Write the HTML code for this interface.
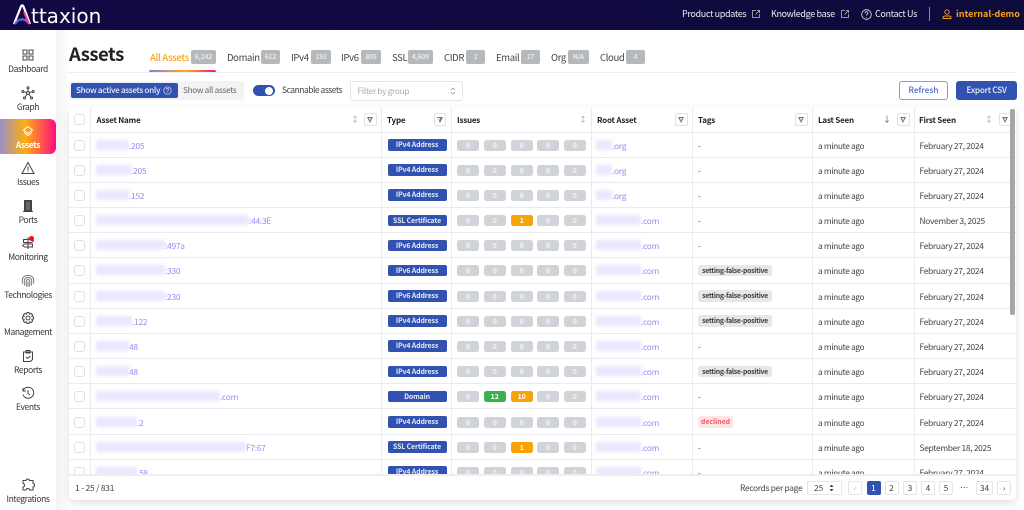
<!DOCTYPE html>
<html><head><meta charset="utf-8"><style>
*{box-sizing:border-box;margin:0;padding:0}
html,body{width:1024px;height:510px;overflow:hidden;background:#fff;font-family:"Noto Sans CJK JP","Liberation Sans",sans-serif;color:#343a40}
.a{position:absolute;white-space:nowrap}
#top{position:absolute;left:0;top:0;width:1024px;height:30px;background:linear-gradient(90deg,#120844,#0d0a3c)}
#top .a{color:#eceef5;font-size:9px;letter-spacing:-.35px;top:7px;line-height:14px}
#side{position:absolute;left:0;top:30px;width:56px;height:480px;background:#fff}
#gut{position:absolute;left:56px;top:30px;width:13px;height:480px;background:linear-gradient(90deg,#f3f3f3,#fafafa 70%,#fff)}
.nav{position:absolute;left:0;width:56px;text-align:center;font-size:8.5px;letter-spacing:-.4px;line-height:12px;color:#333}
.nav svg{position:absolute;left:21px;top:-15px;width:14px;height:14px;fill:none;stroke:#444;stroke-width:1}
.act{position:absolute;left:0;top:119px;width:56px;height:35px;border-radius:0 6px 6px 0;background:linear-gradient(90deg,#9a8fc8,#ffad0d 45%,#ff0d7f)}
.tab{position:absolute;top:50px;font-size:9.5px;letter-spacing:-.35px;line-height:14px;color:#444;white-space:nowrap}
.cnt{position:absolute;top:50px;height:13.5px;background:#b5b9bc;color:#e8eaec;font-size:6.6px;letter-spacing:-.1px;font-weight:700;line-height:13.5px;text-align:center;border-radius:2px}
#tbl{position:absolute;left:69px;top:107px;width:947px;height:393px;background:#fff;border-radius:5px;box-shadow:0 3px 8px rgba(0,0,0,.13);overflow:hidden}
#clip{position:absolute;left:0;top:0;width:947px;height:368px;overflow:hidden}
.r{position:absolute;left:0;width:947px;height:25.17px;border-bottom:1px solid #e9ebf0}
.v{position:absolute;top:0;width:1px;height:368px;background:#e9ebf0}
.h{position:absolute;top:7px;font-size:8px;letter-spacing:-.2px;font-weight:700;color:#222;line-height:14px;white-space:nowrap}
.cb{position:absolute;left:5px;top:7px;width:11px;height:11px;border:1px solid #dfe1e5;border-radius:3px;background:#fff}
.n{position:absolute;left:27px;top:7px;font-size:8.4px;letter-spacing:-.25px;line-height:13px;color:#8f8ef0;white-space:nowrap}
.b{display:inline-block;height:10px;background:#e9e8ff;filter:blur(1.6px);vertical-align:-1px}
.t{position:absolute;left:318.5px;top:6.5px;width:59px;height:11.5px;background:#3152b0;border-radius:2px;color:#e6eaf8;font-size:6.9px;letter-spacing:-.1px;font-weight:700;line-height:11.5px;text-align:center}
.i{position:absolute;top:7px;width:21.5px;height:11px;background:#d0d4d9;border-radius:2.5px;color:#f4f5f6;font-size:6.9px;font-weight:700;line-height:11px;text-align:center}
.i1{left:388px}.i2{left:415px}.i3{left:442px}.i4{left:468px}.i5{left:495px}
.g{background:#38b24c;color:#fff}.o{background:#f8a207;color:#fff}
.ra{position:absolute;left:527px;top:7px;font-size:8.4px;letter-spacing:-.25px;line-height:13px;color:#8f8ef0;white-space:nowrap}
.tg{position:absolute;left:629px;top:7px;font-size:8.4px;line-height:13px;color:#555}
.tp{position:absolute;left:629px;top:6.5px;width:74px;height:11.5px;background:#e7e7e8;border-radius:2.5px;color:#3a3f44;font-size:6.9px;letter-spacing:-.28px;font-weight:700;line-height:11.5px;text-align:center}
.tr{position:absolute;left:629px;top:6.5px;width:35px;height:11.5px;background:#ffe5e6;border-radius:2.5px;color:#f0585e;font-size:6.9px;font-weight:700;line-height:11.5px;text-align:center}
.ls{position:absolute;left:749px;top:7px;font-size:8.4px;letter-spacing:-.38px;line-height:13px;color:#444;white-space:nowrap}
.fs{position:absolute;left:850.5px;top:7px;font-size:8.4px;letter-spacing:-.3px;line-height:13px;color:#444;white-space:nowrap}
.f{position:absolute;top:6px;width:12.5px;height:13px;border:1px solid #dfe1e5;border-radius:2px;background:#fff}
.f:after{content:"";position:absolute;left:2.2px;top:3px;border-left:3px solid transparent;border-right:3px solid transparent;border-top:6px solid #777}
.f:before{content:"";position:absolute;z-index:1;left:3.7px;top:3.9px;border-left:1.5px solid transparent;border-right:1.5px solid transparent;border-top:3px solid #fff}
.s{position:absolute;top:6px;font-size:8px;line-height:13px;color:#aaa}
.p{position:absolute;top:481px;height:14px;width:14px;border:1px solid #e3e5e8;border-radius:2px;background:#fff;font-size:8.4px;line-height:12px;text-align:center;color:#444}
</style></head><body>
<div id="top">
<svg class="a" style="left:12px;top:4px;width:20px;height:21px" viewBox="0 0 20 21"><path d="M2 20L9 2.500c.7-1.500 1.800-1.500 2.500 0L18 20" fill="none" stroke="#fff" stroke-width="2.200"/><path d="M3 20c3-5 9-7 14-.5" fill="none" stroke="#5a6be0" stroke-width="2.200"/><path d="M12 8l5 12" fill="none" stroke="#ff3d80" stroke-width="2"/></svg>
<div class="a" style="left:31px;top:3px;font-family:'DejaVu Sans',sans-serif;font-size:20px;line-height:26px;color:#fff;letter-spacing:0">ttaxion</div>
<div class="a" style="left:682px">Product updates</div>
<svg class="a" style="left:752px;top:10px;width:8px;height:8px" viewBox="0 0 8 8" fill="none" stroke="#bbb" stroke-width=".8"><path d="M4 .5H.5v7h7V4M3.500 4.500L7.500.5M5 .5h2.500V3"/></svg>
<div class="a" style="left:771px">Knowledge base</div>
<svg class="a" style="left:841px;top:10px;width:8px;height:8px" viewBox="0 0 8 8" fill="none" stroke="#bbb" stroke-width=".8"><path d="M4 .5H.5v7h7V4M3.500 4.500L7.500.5M5 .5h2.500V3"/></svg>
<svg class="a" style="left:861px;top:9px;width:11px;height:11px" viewBox="0 0 11 11" fill="none" stroke="#eee" stroke-width=".8"><circle cx="5.500" cy="5.500" r="4.800"/><path d="M4 4.300c0-2 3-2 3-.2 0 1.200-1.500 1.100-1.500 2.500M5.500 8v.6"/></svg>
<div class="a" style="left:875px">Contact Us</div>
<div class="a" style="left:929px;top:7px;width:1px;height:14px;background:#8a88a8"></div>
<svg class="a" style="left:942px;top:9px;width:10px;height:10px" viewBox="0 0 10 10" fill="none" stroke="#f9a31a" stroke-width=".9"><circle cx="5" cy="3" r="2.200"/><path d="M1 9.500V8.500c0-1 1-1.500 2-1.500h4c1 0 2 .5 2 1.500v1z"/></svg>
<div class="a" style="left:956px;color:#f9a31a;font-weight:700;letter-spacing:0">internal-demo</div>
</div>
<div id="side"></div><div id="gut"></div>
<div class="act"></div>
<div class="nav" style="top:63px"><svg viewBox="0 0 14 14"><rect x="2" y="2" width="4" height="4"/><rect x="8" y="2" width="4" height="4"/><rect x="2" y="8" width="4" height="4"/><rect x="8" y="8" width="4" height="4"/></svg>Dashboard</div>
<div class="nav" style="top:101px"><svg viewBox="0 0 14 14"><circle cx="7" cy="7" r="1.500"/><circle cx="7" cy="1.800" r="1"/><circle cx="1.800" cy="5.500" r="1"/><circle cx="12.200" cy="5.500" r="1"/><circle cx="3.500" cy="12" r="1"/><circle cx="10.500" cy="12" r="1"/><path d="M7 3v2.500M3 5.800l2.500.8M11 5.800l-2.500.8M4.200 11l2-2.800M9.800 11l-2-2.800"/></svg>Graph</div>
<div class="nav" style="top:139px;color:#fff;font-weight:700"><svg viewBox="0 0 14 14" style="stroke:#fff"><path d="M7 2.500l4.500 3.500L7 9.500 2.500 6zM3 8.500L7 11.500 11 8.500"/></svg>Assets</div>
<div class="nav" style="top:176px"><svg viewBox="0 0 14 14"><path d="M7 1.500L13 12.500H1zM7 5.500v4M7 10.500v.6"/></svg>Issues</div>
<div class="nav" style="top:214px"><svg viewBox="0 0 14 14"><path d="M3.500 12.500V1.500h7v11M2 12.500h10"/><rect x="4.500" y="2.500" width="5" height="9" fill="#666"/></svg>Ports</div>
<div class="nav" style="top:251px"><svg viewBox="0 0 14 14"><path d="M7 1v12M2.500 3.500h8l2 1.500-2 1.500h-8zM11.500 8h-8l-2 1.500 2 1.500h8z"/></svg>Monitoring</div>
<div class="a" style="left:29px;top:235.500px;width:5px;height:5px;border-radius:50%;background:#f01010"></div>
<div class="nav" style="top:289px"><svg viewBox="0 0 14 14" style="stroke:#777"><path d="M7 1.500c-6 0-6 4-5.500 8M7 3.500c-4 0-4 3-3.500 8M7 5.500c-2 0-2 3-1.500 7M7 1.500c6 0 6 4 5.500 8M7 3.500c4 0 4 3 3.500 8M7 5.500c2 0 2 3 1.500 7M7 7.500v5"/></svg>Technologies</div>
<div class="nav" style="top:326px"><svg viewBox="0 0 14 14"><circle cx="7" cy="7" r="2"/><path d="M6 1.500h2l.5 1.700 1.600-.8 1.500 1.500-.8 1.600 1.700.5v2l-1.700.5.8 1.600-1.500 1.500-1.600-.8-.5 1.700H6l-.5-1.700-1.600.8-1.500-1.500.8-1.600-1.700-.5V6l1.700-.5-.8-1.600 1.500-1.500 1.600.8z"/></svg>Management</div>
<div class="nav" style="top:364px"><svg viewBox="0 0 14 14"><path d="M2.500 3h9v7.500l-2 2h-7zM5 1.500h4V4H5zM5 8l1.500 1.500L9.500 7"/></svg>Reports</div>
<div class="nav" style="top:401px"><svg viewBox="0 0 14 14"><path d="M2.200 4.500A5.500 5.500 0 1 1 2 8.500M2 2v3h3M7 4v3.500l2 1.500"/></svg>Events</div>
<div class="nav" style="top:493px"><svg viewBox="0 0 14 14"><path d="M5 2.500c0-2 3.500-2 3.500 0h3.500v3c2 0 2 3.500 0 3.500v3H8.500c0-2-3.500-2-3.500 0H2V9c2 0 2-3.500 0-3.500v-3z"/></svg>Integrations</div>
<div class="a" style="left:69px;top:41px;font-size:18.500px;letter-spacing:-.5px;line-height:26px;font-weight:700;color:#222">Assets</div>
<div class="tab" style="left:150px;color:#f9a31a;font-weight:500">All Assets</div><div class="cnt" style="left:191px;width:25px">6,242</div>
<div class="tab" style="left:227px">Domain</div><div class="cnt" style="left:261px;width:19px">612</div>
<div class="tab" style="left:291px">IPv4</div><div class="cnt" style="left:311px;width:20px">193</div>
<div class="tab" style="left:341px">IPv6</div><div class="cnt" style="left:361px;width:20px">805</div>
<div class="tab" style="left:392px">SSL</div><div class="cnt" style="left:408px;width:25px">4,609</div>
<div class="tab" style="left:444px">CIDR</div><div class="cnt" style="left:466px;width:19px">2</div>
<div class="tab" style="left:496px">Email</div><div class="cnt" style="left:521px;width:19px">17</div>
<div class="tab" style="left:551px">Org</div><div class="cnt" style="left:568px;width:21px">N/A</div>
<div class="tab" style="left:600px">Cloud</div><div class="cnt" style="left:626px;width:19px">4</div>
<div class="a" style="left:69px;top:72px;width:947px;height:1px;background:#eceef0"></div>
<div class="a" style="left:149px;top:69.500px;width:67px;height:2.500px;border-radius:2px 2px 0 0;background:linear-gradient(90deg,#8d7ad8,#ffad0d 55%,#ff0d7f)"></div>
<div class="a" style="left:69px;top:81px;width:175px;height:19px;background:#f2f3f5;border-radius:3px"></div>
<div class="a" style="left:71px;top:83px;width:107px;height:15px;background:#3152b0;border-radius:2px;color:#e8ecf8;font-size:8.200px;letter-spacing:-.35px;line-height:15px;padding-left:5px;font-weight:500">Show active assets only</div>
<svg class="a" style="left:163px;top:86px;width:9px;height:9px" viewBox="0 0 9 9" fill="none" stroke="#dde" stroke-width=".7"><circle cx="4.500" cy="4.500" r="3.700"/><path d="M3.300 3.500c0-1.500 2.400-1.500 2.400 0 0 1-1.200.8-1.200 2M4.500 6.300v.5"/></svg>
<div class="a" style="left:183px;top:83px;font-size:8.200px;letter-spacing:-.3px;line-height:15px;color:#666">Show all assets</div>
<div class="a" style="left:253px;top:85px;width:22px;height:11px;border-radius:6px;background:#3152b0"></div>
<div class="a" style="left:265px;top:86.500px;width:8px;height:8px;border-radius:50%;background:#fff"></div>
<div class="a" style="left:282px;top:83px;font-size:8.500px;letter-spacing:-.5px;line-height:15px;color:#444">Scannable assets</div>
<div class="a" style="left:350px;top:81px;width:113px;height:19.500px;border:1px solid #e3e5e8;border-radius:3px;background:#fff;color:#aab;font-size:8.300px;letter-spacing:-.3px;line-height:18px;padding-left:6.500px">Filter by group</div>
<svg class="a" style="left:450px;top:87px;width:6px;height:8px" viewBox="0 0 6 8" fill="none" stroke="#999" stroke-width=".8"><path d="M1 3l2-2 2 2M1 5l2 2 2-2"/></svg>
<div class="a" style="left:899px;top:81px;width:49px;height:19px;border:1px solid #8a9cd4;border-radius:3px;background:#fff;color:#4c66b8;font-size:8.300px;font-weight:500;line-height:17px;text-align:center">Refresh</div>
<div class="a" style="left:956px;top:81px;width:61px;height:19px;background:#3152b0;border-radius:3px;color:#eef1fa;font-size:8.300px;letter-spacing:-.3px;font-weight:500;line-height:19px;text-align:center">Export CSV</div>
<div id="tbl"><div id="clip">
<div class="r" style="top:0;height:26px"><div class="cb" style="top:7px"></div>
<div class="h" style="left:27.500px">Asset Name</div><div class="s" style="left:282px">&#8597;</div><div class="f" style="left:295px"></div>
<div class="h" style="left:318px">Type</div><div class="f" style="left:364.500px"></div>
<div class="h" style="left:388px">Issues</div><div class="s" style="left:510px">&#8597;</div>
<div class="h" style="left:528px">Root Asset</div><div class="f" style="left:606px"></div>
<div class="h" style="left:629px">Tags</div><div class="f" style="left:726px"></div>
<div class="h" style="left:749px">Last Seen</div><div class="s" style="left:814px;color:#555">&#8595;</div><div class="f" style="left:828px"></div>
<div class="h" style="left:850px">First Seen</div><div class="s" style="left:916px">&#8597;</div><div class="f" style="left:930px"></div></div>

<div class="r" style="top:25.500px"><div class="cb"></div><div class="n"><span class="b" style="width:33px"></span>.205</div><div class="t">IPv4 Address</div><div class="i i1">0</div><div class="i i2">0</div><div class="i i3">0</div><div class="i i4">0</div><div class="i i5">0</div><div class="ra"><span class="b" style="width:16px"></span>.org</div><div class="tg">-</div><div class="ls">a minute ago</div><div class="fs">February 27, 2024</div></div>
<div class="r" style="top:50.670px"><div class="cb"></div><div class="n"><span class="b" style="width:35px"></span>.205</div><div class="t">IPv4 Address</div><div class="i i1">0</div><div class="i i2">0</div><div class="i i3">0</div><div class="i i4">0</div><div class="i i5">0</div><div class="ra"><span class="b" style="width:16px"></span>.org</div><div class="tg">-</div><div class="ls">a minute ago</div><div class="fs">February 27, 2024</div></div>
<div class="r" style="top:75.840px"><div class="cb"></div><div class="n"><span class="b" style="width:33px"></span>.152</div><div class="t">IPv4 Address</div><div class="i i1">0</div><div class="i i2">0</div><div class="i i3">0</div><div class="i i4">0</div><div class="i i5">0</div><div class="ra"><span class="b" style="width:16px"></span>.org</div><div class="tg">-</div><div class="ls">a minute ago</div><div class="fs">February 27, 2024</div></div>
<div class="r" style="top:101px"><div class="cb"></div><div class="n"><span class="b" style="width:153px"></span>:44:3E</div><div class="t">SSL Certificate</div><div class="i i1">0</div><div class="i i2">0</div><div class="i i3 o">1</div><div class="i i4">0</div><div class="i i5">0</div><div class="ra"><span class="b" style="width:45px"></span>.com</div><div class="tg">-</div><div class="ls">a minute ago</div><div class="fs">November 3, 2025</div></div>
<div class="r" style="top:126.200px"><div class="cb"></div><div class="n"><span class="b" style="width:69px"></span>:497a</div><div class="t">IPv6 Address</div><div class="i i1">0</div><div class="i i2">0</div><div class="i i3">0</div><div class="i i4">0</div><div class="i i5">0</div><div class="ra"><span class="b" style="width:45px"></span>.com</div><div class="tg">-</div><div class="ls">a minute ago</div><div class="fs">February 27, 2024</div></div>
<div class="r" style="top:151.400px"><div class="cb"></div><div class="n"><span class="b" style="width:69px"></span>:330</div><div class="t">IPv6 Address</div><div class="i i1">0</div><div class="i i2">0</div><div class="i i3">0</div><div class="i i4">0</div><div class="i i5">0</div><div class="ra"><span class="b" style="width:45px"></span>.com</div><div class="tp">setting-false-positive</div><div class="ls">a minute ago</div><div class="fs">February 27, 2024</div></div>
<div class="r" style="top:176.500px"><div class="cb"></div><div class="n"><span class="b" style="width:69px"></span>:230</div><div class="t">IPv6 Address</div><div class="i i1">0</div><div class="i i2">0</div><div class="i i3">0</div><div class="i i4">0</div><div class="i i5">0</div><div class="ra"><span class="b" style="width:45px"></span>.com</div><div class="tp">setting-false-positive</div><div class="ls">a minute ago</div><div class="fs">February 27, 2024</div></div>
<div class="r" style="top:201.700px"><div class="cb"></div><div class="n"><span class="b" style="width:36px"></span>.122</div><div class="t">IPv4 Address</div><div class="i i1">0</div><div class="i i2">0</div><div class="i i3">0</div><div class="i i4">0</div><div class="i i5">0</div><div class="ra"><span class="b" style="width:45px"></span>.com</div><div class="tp">setting-false-positive</div><div class="ls">a minute ago</div><div class="fs">February 27, 2024</div></div>
<div class="r" style="top:226.900px"><div class="cb"></div><div class="n"><span class="b" style="width:33px"></span>48</div><div class="t">IPv4 Address</div><div class="i i1">0</div><div class="i i2">0</div><div class="i i3">0</div><div class="i i4">0</div><div class="i i5">0</div><div class="ra"><span class="b" style="width:45px"></span>.com</div><div class="tg">-</div><div class="ls">a minute ago</div><div class="fs">February 27, 2024</div></div>
<div class="r" style="top:252px"><div class="cb"></div><div class="n"><span class="b" style="width:33px"></span>48</div><div class="t">IPv4 Address</div><div class="i i1">0</div><div class="i i2">0</div><div class="i i3">0</div><div class="i i4">0</div><div class="i i5">0</div><div class="ra"><span class="b" style="width:45px"></span>.com</div><div class="tp">setting-false-positive</div><div class="ls">a minute ago</div><div class="fs">February 27, 2024</div></div>
<div class="r" style="top:277.300px"><div class="cb"></div><div class="n"><span class="b" style="width:124px"></span>.com</div><div class="t">Domain</div><div class="i i1">0</div><div class="i i2 g">12</div><div class="i i3 o">10</div><div class="i i4">0</div><div class="i i5">0</div><div class="ra"><span class="b" style="width:45px"></span>.com</div><div class="tg">-</div><div class="ls">a minute ago</div><div class="fs">February 27, 2024</div></div>
<div class="r" style="top:302.500px"><div class="cb"></div><div class="n"><span class="b" style="width:41px"></span>.2</div><div class="t">IPv4 Address</div><div class="i i1">0</div><div class="i i2">0</div><div class="i i3">0</div><div class="i i4">0</div><div class="i i5">0</div><div class="ra"><span class="b" style="width:45px"></span>.com</div><div class="tr">declined</div><div class="ls">a minute ago</div><div class="fs">February 27, 2024</div></div>
<div class="r" style="top:327.600px"><div class="cb"></div><div class="n"><span class="b" style="width:150px"></span>F7:67</div><div class="t">SSL Certificate</div><div class="i i1">0</div><div class="i i2">0</div><div class="i i3 o">1</div><div class="i i4">0</div><div class="i i5">0</div><div class="ra"><span class="b" style="width:45px"></span>.com</div><div class="tg">-</div><div class="ls">a minute ago</div><div class="fs">September 18, 2025</div></div>
<div class="r" style="top:352.800px"><div class="cb"></div><div class="n"><span class="b" style="width:41px"></span>.58</div><div class="t">IPv4 Address</div><div class="i i1">0</div><div class="i i2">0</div><div class="i i3">0</div><div class="i i4">0</div><div class="i i5">0</div><div class="ra"><span class="b" style="width:45px"></span>.com</div><div class="tg">-</div><div class="ls">a minute ago</div><div class="fs">February 27, 2024</div></div>

<div class="v" style="left:21px"></div><div class="v" style="left:312px"></div><div class="v" style="left:382px"></div><div class="v" style="left:522px"></div><div class="v" style="left:623px"></div><div class="v" style="left:743px"></div><div class="v" style="left:845px"></div>
<div class="a" style="left:941px;top:2px;width:4.500px;height:206px;background:#a6a6a6;border-radius:2px"></div>
</div>
<div class="a" style="left:0;top:367px;width:947px;height:2px;background:#eceef0"></div>
<div class="a" style="left:6px;top:374px;font-size:8.400px;letter-spacing:-.2px;line-height:14px;color:#444">1 - 25 / 831</div>
</div>
<div class="a" style="left:740px;top:481px;font-size:8.400px;letter-spacing:-.3px;line-height:14px;color:#444">Records per page</div>
<div class="p" style="left:807px;width:35px;text-align:left;padding-left:6px">25</div>
<svg class="a" style="left:829px;top:484px;width:5px;height:8px" viewBox="0 0 5 8" fill="#444"><path d="M2.500 .5L4.500 3H.5zM2.500 7.500L.5 5h4z"/></svg>
<div class="p" style="left:848px;color:#bbb">&#8249;</div>
<div class="p" style="left:866.500px;background:#3152b0;border-color:#3152b0;color:#fff">1</div>
<div class="p" style="left:884.500px">2</div><div class="p" style="left:903px">3</div><div class="p" style="left:921px">4</div><div class="p" style="left:939px">5</div>
<div class="a" style="left:960px;top:481px;font-size:8.400px;line-height:14px;color:#444">&#8943;</div>
<div class="p" style="left:976px;width:17px">34</div>
<div class="p" style="left:997px">&#8250;</div>
</body></html>
